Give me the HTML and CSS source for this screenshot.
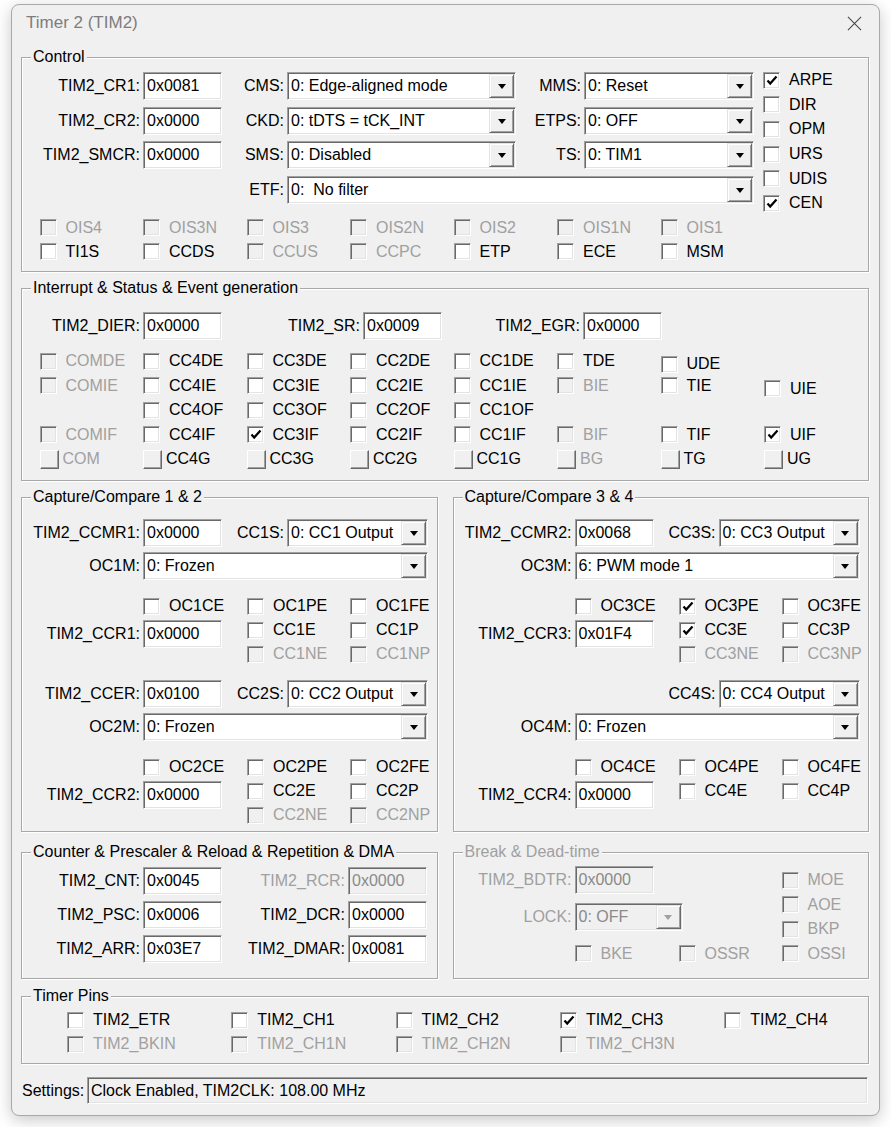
FILE: index.html
```html
<!DOCTYPE html>
<html>
<head>
<meta charset="utf-8">
<link rel="stylesheet" href="styles.css">
</head>
<body>
<div class="win">
  <div class="titlebar">
    <span class="wtitle">Timer 2 (TIM2)</span>
    <svg class="close" viewBox="0 0 16 16"><path d="M1 1L15 15M15 1L1 15"/></svg>
  </div>

  <div class="group g-control">
    <span class="gtitle">Control</span>
    <div class="ctrl-top">
      <div class="ctrl-grid">
        <span class="lbl">TIM2_CR1:</span><span class="edit">0x0081</span>
        <span class="lbl">CMS:</span><span class="combo"><span class="ct">0: Edge-aligned mode</span><i class="dd"></i></span>
        <span class="lbl">MMS:</span><span class="combo"><span class="ct">0: Reset</span><i class="dd"></i></span>

        <span class="lbl">TIM2_CR2:</span><span class="edit">0x0000</span>
        <span class="lbl">CKD:</span><span class="combo"><span class="ct">0: tDTS = tCK_INT</span><i class="dd"></i></span>
        <span class="lbl">ETPS:</span><span class="combo"><span class="ct">0: OFF</span><i class="dd"></i></span>

        <span class="lbl">TIM2_SMCR:</span><span class="edit">0x0000</span>
        <span class="lbl">SMS:</span><span class="combo"><span class="ct">0: Disabled</span><i class="dd"></i></span>
        <span class="lbl">TS:</span><span class="combo"><span class="ct">0: TIM1</span><i class="dd"></i></span>

        <span></span><span></span>
        <span class="lbl">ETF:</span><span class="combo span3"><span class="ct">0:&nbsp; No filter</span><i class="dd"></i></span>
      </div>
      <div class="flags">
        <span class="cb"><i class="box"><svg class="chk" viewBox="0 0 15 15"><path d="M3.5 7.5L6.2 10.5L12.5 3.5"/></svg></i>ARPE</span>
        <span class="cb"><i class="box"></i>DIR</span>
        <span class="cb"><i class="box"></i>OPM</span>
        <span class="cb"><i class="box"></i>URS</span>
        <span class="cb"><i class="box"></i>UDIS</span>
        <span class="cb"><i class="box"><svg class="chk" viewBox="0 0 15 15"><path d="M3.5 7.5L6.2 10.5L12.5 3.5"/></svg></i>CEN</span>
      </div>
    </div>
    <div class="grid7">
      <span class="cb dis"><i class="box"></i>OIS4</span>
      <span class="cb dis"><i class="box"></i>OIS3N</span>
      <span class="cb dis"><i class="box"></i>OIS3</span>
      <span class="cb dis"><i class="box"></i>OIS2N</span>
      <span class="cb dis"><i class="box"></i>OIS2</span>
      <span class="cb dis"><i class="box"></i>OIS1N</span>
      <span class="cb dis"><i class="box"></i>OIS1</span>
      <span class="cb"><i class="box"></i>TI1S</span>
      <span class="cb"><i class="box"></i>CCDS</span>
      <span class="cb dis"><i class="box"></i>CCUS</span>
      <span class="cb dis"><i class="box"></i>CCPC</span>
      <span class="cb"><i class="box"></i>ETP</span>
      <span class="cb"><i class="box"></i>ECE</span>
      <span class="cb"><i class="box"></i>MSM</span>
    </div>
  </div>

  <div class="group g-int">
    <span class="gtitle">Interrupt &amp; Status &amp; Event generation</span>
    <div class="regrow">
      <span class="lbl w121">TIM2_DIER:</span><span class="edit">0x0000</span>
      <span class="lbl w141">TIM2_SR:</span><span class="edit">0x0009</span>
      <span class="lbl w141">TIM2_EGR:</span><span class="edit">0x0000</span>
    </div>
    <div class="grid8">
      <span class="cb dis"><i class="box"></i>COMDE</span>
      <span class="cb"><i class="box"></i>CC4DE</span>
      <span class="cb"><i class="box"></i>CC3DE</span>
      <span class="cb"><i class="box"></i>CC2DE</span>
      <span class="cb"><i class="box"></i>CC1DE</span>
      <span class="cb"><i class="box"></i>TDE</span>
      <span class="cb dn3"><i class="box"></i>UDE</span>
      <span></span>

      <span class="cb dis"><i class="box"></i>COMIE</span>
      <span class="cb"><i class="box"></i>CC4IE</span>
      <span class="cb"><i class="box"></i>CC3IE</span>
      <span class="cb"><i class="box"></i>CC2IE</span>
      <span class="cb"><i class="box"></i>CC1IE</span>
      <span class="cb dis"><i class="box"></i>BIE</span>
      <span class="cb"><i class="box"></i>TIE</span>
      <span class="cb dn3"><i class="box"></i>UIE</span>

      <span></span>
      <span class="cb"><i class="box"></i>CC4OF</span>
      <span class="cb"><i class="box"></i>CC3OF</span>
      <span class="cb"><i class="box"></i>CC2OF</span>
      <span class="cb"><i class="box"></i>CC1OF</span>
      <span></span><span></span><span></span>

      <span class="cb dis"><i class="box"></i>COMIF</span>
      <span class="cb"><i class="box"></i>CC4IF</span>
      <span class="cb"><i class="box"><svg class="chk" viewBox="0 0 15 15"><path d="M3.5 7.5L6.2 10.5L12.5 3.5"/></svg></i>CC3IF</span>
      <span class="cb"><i class="box"></i>CC2IF</span>
      <span class="cb"><i class="box"></i>CC1IF</span>
      <span class="cb dis"><i class="box"></i>BIF</span>
      <span class="cb"><i class="box"></i>TIF</span>
      <span class="cb"><i class="box"><svg class="chk" viewBox="0 0 15 15"><path d="M3.5 7.5L6.2 10.5L12.5 3.5"/></svg></i>UIF</span>

      <span class="cb pb dis"><i class="btn"></i>COM</span>
      <span class="cb pb"><i class="btn"></i>CC4G</span>
      <span class="cb pb"><i class="btn"></i>CC3G</span>
      <span class="cb pb"><i class="btn"></i>CC2G</span>
      <span class="cb pb"><i class="btn"></i>CC1G</span>
      <span class="cb pb dis"><i class="btn"></i>BG</span>
      <span class="cb pb"><i class="btn"></i>TG</span>
      <span class="cb pb"><i class="btn"></i>UG</span>
    </div>
  </div>

  <div class="pair ccpair">
    <div class="group cc">
      <span class="gtitle">Capture/Compare 1 &amp; 2</span>
      <div class="cc-head">
        <span class="lbl">TIM2_CCMR1:</span><span class="edit">0x0000</span>
        <span class="lbl">CC1S:</span><span class="combo"><span class="ct">0: CC1 Output</span><i class="dd"></i></span>
        <span class="lbl">OC1M:</span><span class="combo span3"><span class="ct">0: Frozen</span><i class="dd"></i></span>
      </div>
      <div class="cc-cbs">
        <span class="cb c2 r1"><i class="box"></i>OC1CE</span>
        <span class="cb c3 r1"><i class="box"></i>OC1PE</span>
        <span class="cb c4 r1"><i class="box"></i>OC1FE</span>
        <span class="lbl reg-l">TIM2_CCR1:</span><span class="edit reg-e">0x0000</span>
        <span class="cb c3 r2"><i class="box"></i>CC1E</span>
        <span class="cb c4 r2"><i class="box"></i>CC1P</span>
        <span class="cb dis c3 r3"><i class="box"></i>CC1NE</span>
        <span class="cb dis c4 r3"><i class="box"></i>CC1NP</span>
      </div>
      <div class="cc-head">
        <span class="lbl">TIM2_CCER:</span><span class="edit">0x0100</span>
        <span class="lbl">CC2S:</span><span class="combo"><span class="ct">0: CC2 Output</span><i class="dd"></i></span>
        <span class="lbl">OC2M:</span><span class="combo span3"><span class="ct">0: Frozen</span><i class="dd"></i></span>
      </div>
      <div class="cc-cbs">
        <span class="cb c2 r1"><i class="box"></i>OC2CE</span>
        <span class="cb c3 r1"><i class="box"></i>OC2PE</span>
        <span class="cb c4 r1"><i class="box"></i>OC2FE</span>
        <span class="lbl reg-l">TIM2_CCR2:</span><span class="edit reg-e">0x0000</span>
        <span class="cb c3 r2"><i class="box"></i>CC2E</span>
        <span class="cb c4 r2"><i class="box"></i>CC2P</span>
        <span class="cb dis c3 r3"><i class="box"></i>CC2NE</span>
        <span class="cb dis c4 r3"><i class="box"></i>CC2NP</span>
      </div>
    </div>

    <div class="group cc">
      <span class="gtitle">Capture/Compare 3 &amp; 4</span>
      <div class="cc-head">
        <span class="lbl">TIM2_CCMR2:</span><span class="edit">0x0068</span>
        <span class="lbl">CC3S:</span><span class="combo"><span class="ct">0: CC3 Output</span><i class="dd"></i></span>
        <span class="lbl">OC3M:</span><span class="combo span3"><span class="ct">6: PWM mode 1</span><i class="dd"></i></span>
      </div>
      <div class="cc-cbs">
        <span class="cb c2 r1"><i class="box"></i>OC3CE</span>
        <span class="cb c3 r1"><i class="box"><svg class="chk" viewBox="0 0 15 15"><path d="M3.5 7.5L6.2 10.5L12.5 3.5"/></svg></i>OC3PE</span>
        <span class="cb c4 r1"><i class="box"></i>OC3FE</span>
        <span class="lbl reg-l">TIM2_CCR3:</span><span class="edit reg-e">0x01F4</span>
        <span class="cb c3 r2"><i class="box"><svg class="chk" viewBox="0 0 15 15"><path d="M3.5 7.5L6.2 10.5L12.5 3.5"/></svg></i>CC3E</span>
        <span class="cb c4 r2"><i class="box"></i>CC3P</span>
        <span class="cb dis c3 r3"><i class="box"></i>CC3NE</span>
        <span class="cb dis c4 r3"><i class="box"></i>CC3NP</span>
      </div>
      <div class="cc-head">
        <span></span><span></span>
        <span class="lbl">CC4S:</span><span class="combo"><span class="ct">0: CC4 Output</span><i class="dd"></i></span>
        <span class="lbl">OC4M:</span><span class="combo span3"><span class="ct">0: Frozen</span><i class="dd"></i></span>
      </div>
      <div class="cc-cbs">
        <span class="cb c2 r1"><i class="box"></i>OC4CE</span>
        <span class="cb c3 r1"><i class="box"></i>OC4PE</span>
        <span class="cb c4 r1"><i class="box"></i>OC4FE</span>
        <span class="lbl reg-l">TIM2_CCR4:</span><span class="edit reg-e">0x0000</span>
        <span class="cb c3 r2"><i class="box"></i>CC4E</span>
        <span class="cb c4 r2"><i class="box"></i>CC4P</span>
      </div>
    </div>
  </div>

  <div class="pair lowpair">
    <div class="group low">
      <span class="gtitle">Counter &amp; Prescaler &amp; Reload &amp; Repetition &amp; DMA</span>
      <div class="cnt-grid">
        <span class="lbl">TIM2_CNT:</span><span class="edit">0x0045</span>
        <span class="lbl dis">TIM2_RCR:</span><span class="edit dis">0x0000</span>
        <span class="lbl">TIM2_PSC:</span><span class="edit">0x0006</span>
        <span class="lbl">TIM2_DCR:</span><span class="edit">0x0000</span>
        <span class="lbl">TIM2_ARR:</span><span class="edit">0x03E7</span>
        <span class="lbl">TIM2_DMAR:</span><span class="edit">0x0081</span>
      </div>
    </div>
    <div class="group low">
      <span class="gtitle dis">Break &amp; Dead-time</span>
      <div class="brk-grid">
        <span class="lbl dis b-l1">TIM2_BDTR:</span><span class="edit dis b-e1">0x0000</span>
        <span class="cb dis b-moe"><i class="box"></i>MOE</span>
        <span class="lbl dis b-l2">LOCK:</span>
        <span class="combo dis b-lock"><span class="ct">0: OFF</span><i class="dd"></i></span>
        <span class="cb dis b-aoe"><i class="box"></i>AOE</span>
        <span class="cb dis b-bkp"><i class="box"></i>BKP</span>
        <span class="cb dis b-bke"><i class="box"></i>BKE</span>
        <span class="cb dis b-ossr"><i class="box"></i>OSSR</span>
        <span class="cb dis b-ossi"><i class="box"></i>OSSI</span>
      </div>
    </div>
  </div>

  <div class="group pins">
    <span class="gtitle">Timer Pins</span>
    <div class="grid5">
      <span class="cb"><i class="box"></i>TIM2_ETR</span>
      <span class="cb"><i class="box"></i>TIM2_CH1</span>
      <span class="cb"><i class="box"></i>TIM2_CH2</span>
      <span class="cb"><i class="box"><svg class="chk" viewBox="0 0 15 15"><path d="M3.5 7.5L6.2 10.5L12.5 3.5"/></svg></i>TIM2_CH3</span>
      <span class="cb"><i class="box"></i>TIM2_CH4</span>
      <span class="cb dis"><i class="box"></i>TIM2_BKIN</span>
      <span class="cb dis"><i class="box"></i>TIM2_CH1N</span>
      <span class="cb dis"><i class="box"></i>TIM2_CH2N</span>
      <span class="cb dis"><i class="box"></i>TIM2_CH3N</span>
    </div>
  </div>

  <div class="settings">
    <span class="set-l">Settings:</span>
    <span class="edit ro">Clock Enabled, TIM2CLK: 108.00 MHz</span>
  </div>
</div>
</body>
</html>
```

FILE: styles.css
```css
* { box-sizing: border-box; }
html, body { margin: 0; padding: 0; }
body {
  background: #ffffff;
  width: 891px;
  height: 1127px;
  overflow: hidden;
  font-family: "Liberation Sans", Arial, sans-serif;
  font-size: 16px;
  color: #000;
}
.win {
  margin: 4px 0 0 11px;
  width: 869px;
  height: 1112px;
  background: #f0f0f0;
  border: 1px solid #a9a9a9;
  border-radius: 8px;
  box-shadow: 0 4px 16px rgba(0,0,0,0.22);
  padding: 0 10px 0 9px;
}
.titlebar {
  height: 36px;
  margin: 0 -10px 0 -9px;
  padding: 0 17px 0 14px;
  display: flex;
  align-items: center;
  justify-content: space-between;
}
.wtitle { font-size: 17px; color: #7d7d7d; }
.close { width: 15px; height: 15px; }
.close path { stroke: #444; stroke-width: 1.1; fill: none; }

/* group boxes */
.group {
  position: relative;
  border: 1px solid #a8a8a8;
  box-shadow: inset 1px 1px 0 #fff, 1px 1px 0 #fff;
}
.gtitle {
  position: absolute;
  top: -10px;
  left: 9px;
  line-height: 18px;
  padding: 0 2px;
  background: #f0f0f0;
  white-space: nowrap;
}
.dis { color: #a0a0a0; }

/* basic controls */
.lbl { text-align: right; padding-right: 3px; white-space: nowrap; }
.edit {
  display: flex;
  align-items: center;
  width: 79px;
  height: 28px;
  padding-left: 3px;
  background: #fff;
  border: 1px solid;
  border-color: #a0a0a0 #fff #fff #a0a0a0;
  box-shadow: inset 1px 1px 0 #696969, inset -1px -1px 0 #e3e3e3;
  white-space: nowrap;
  color: #000;
}
.edit.dis { background: #f0f0f0; color: #8a8a8a; }
.combo {
  display: flex;
  align-items: center;
  height: 28px;
  padding: 1px;
  background: #fff;
  border: 1px solid;
  border-color: #a0a0a0 #fff #fff #a0a0a0;
  box-shadow: inset 1px 1px 0 #696969, inset -1px -1px 0 #e3e3e3;
}
.combo .ct { flex: 1; padding-left: 2px; white-space: nowrap; overflow: hidden; }
.dd {
  flex: none;
  width: 25px;
  height: 100%;
  display: flex;
  align-items: center;
  justify-content: center;
  background: #f0f0f0;
  border: 1px solid;
  border-color: #e3e3e3 #696969 #696969 #e3e3e3;
  box-shadow: inset 1px 1px 0 #fff, inset -1px -1px 0 #a0a0a0;
}
.dd::after {
  content: "";
  border-left: 4.5px solid transparent;
  border-right: 4.5px solid transparent;
  border-top: 5px solid #000;
  margin-top: 1px;
}
.combo.dis { background: #f0f0f0; color: #8a8a8a; }
.combo.dis .dd::after { border-top-color: #a0a0a0; }
.span3 { grid-column: span 3; }

.cb { display: flex; align-items: center; white-space: nowrap; }
.box {
  flex: none;
  width: 17px;
  height: 17px;
  margin-right: 9px;
  background: #fff;
  border: 1px solid;
  border-color: #a0a0a0 #fff #fff #a0a0a0;
  box-shadow: inset 1px 1px 0 #696969, inset -1px -1px 0 #e3e3e3;
  display: flex;
}
.cb.dis .box { background: #f0f0f0; }
.chk { width: 15px; height: 15px; }
.chk path { fill: none; stroke: #000; stroke-width: 2.2; }
.pb .btn {
  flex: none;
  width: 19px;
  height: 19px;
  margin-right: 4px;
  background: #f0f0f0;
  border: 1px solid;
  border-color: #fff #696969 #696969 #fff;
  box-shadow: inset -1px -1px 0 #a0a0a0;
}
.dn3 { position: relative; top: 3px; }

/* control */
.g-control { margin-top: 16px; height: 215px; padding-top: 10px; }
.ctrl-top { display: flex; }
.ctrl-grid {
  display: grid;
  grid-template-columns: 121px 79px 65px 229px 68px 170px;
  grid-auto-rows: 28px;
  row-gap: 6.5px;
  margin-top: 4px;
  align-items: center;
}
.flags { margin-left: 9px; display: grid; grid-auto-rows: 24.6px; }
.grid7 {
  display: grid;
  grid-template-columns: repeat(7, 103.5px);
  grid-auto-rows: 24px;
  padding-left: 17.5px;
}

/* interrupt */
.g-int { margin-top: 16px; height: 193px; padding-top: 23px; }
.regrow { display: flex; align-items: center; height: 28px; }
.w121 { width: 121px; }
.w141 { width: 141px; }
.grid8 {
  display: grid;
  grid-template-columns: repeat(8, 103.5px);
  grid-auto-rows: 24.5px;
  padding-left: 17.5px;
  margin-top: 9px;
}

/* capture compare */
.pair { display: flex; gap: 15px; }
.ccpair { margin-top: 16px; }
.cc { width: 417px; height: 335px; padding-top: 21px; }
.cc-head {
  display: grid;
  grid-template-columns: 121px 79px 65px 141px;
  grid-template-rows: 28px 28px;
  row-gap: 5px;
  align-items: center;
}
.cc-head .combo.span3 { grid-column: 2 / 5; }
.cc-cbs {
  display: grid;
  grid-template-columns: 121px 104px 103px 1fr;
  grid-template-rows: 24px 24px 24px;
  margin: 14px 0;
}
.c2 { grid-column: 2; }
.c3 { grid-column: 3; }
.c4 { grid-column: 4; }
.r1 { grid-row: 1; }
.r2 { grid-row: 2; }
.r3 { grid-row: 3; }
.reg-l { grid-column: 1; grid-row: 2 / 4; align-self: start; margin-top: 2px; height: 28px; display: flex; align-items: center; justify-content: flex-end; }
.reg-e { grid-column: 2; grid-row: 2 / 4; align-self: start; margin-top: 2px; }

/* counter & break */
.lowpair { margin-top: 20px; }
.low { width: 417px; height: 127px; padding-top: 14px; }
.cnt-grid {
  display: grid;
  grid-template-columns: 121px 79px 126px 79px;
  grid-auto-rows: 28px;
  row-gap: 6px;
  align-items: center;
}
.brk-grid {
  display: grid;
  grid-template-columns: 121px 104px 103px 1fr;
  grid-template-rows: repeat(4, 24.5px);
  padding-top: 0.75px;
  align-items: center;
}
.b-l1 { grid-column: 1; grid-row: 1; }
.b-e1 { grid-column: 2; grid-row: 1; }
.b-moe { grid-column: 4; grid-row: 1; }
.b-l2 { grid-column: 1; grid-row: 2 / 4; }
.b-lock { grid-column: 2 / 4; grid-row: 2 / 4; width: 108px; }
.b-aoe { grid-column: 4; grid-row: 2; }
.b-bkp { grid-column: 4; grid-row: 3; }
.b-bke { grid-column: 2; grid-row: 4; }
.b-ossr { grid-column: 3; grid-row: 4; }
.b-ossi { grid-column: 4; grid-row: 4; }

/* pins */
.pins { margin-top: 17px; height: 68px; padding-top: 11px; }
.grid5 {
  display: grid;
  grid-template-columns: repeat(5, 164.3px);
  grid-auto-rows: 24px;
  padding-left: 45px;
}

/* settings */
.settings { display: flex; align-items: center; margin: 13px 1px 0 1px; }
.set-l { width: 65px; }
.edit.ro { flex: 1; width: auto; height: 27px; background: #f0f0f0; }
```
